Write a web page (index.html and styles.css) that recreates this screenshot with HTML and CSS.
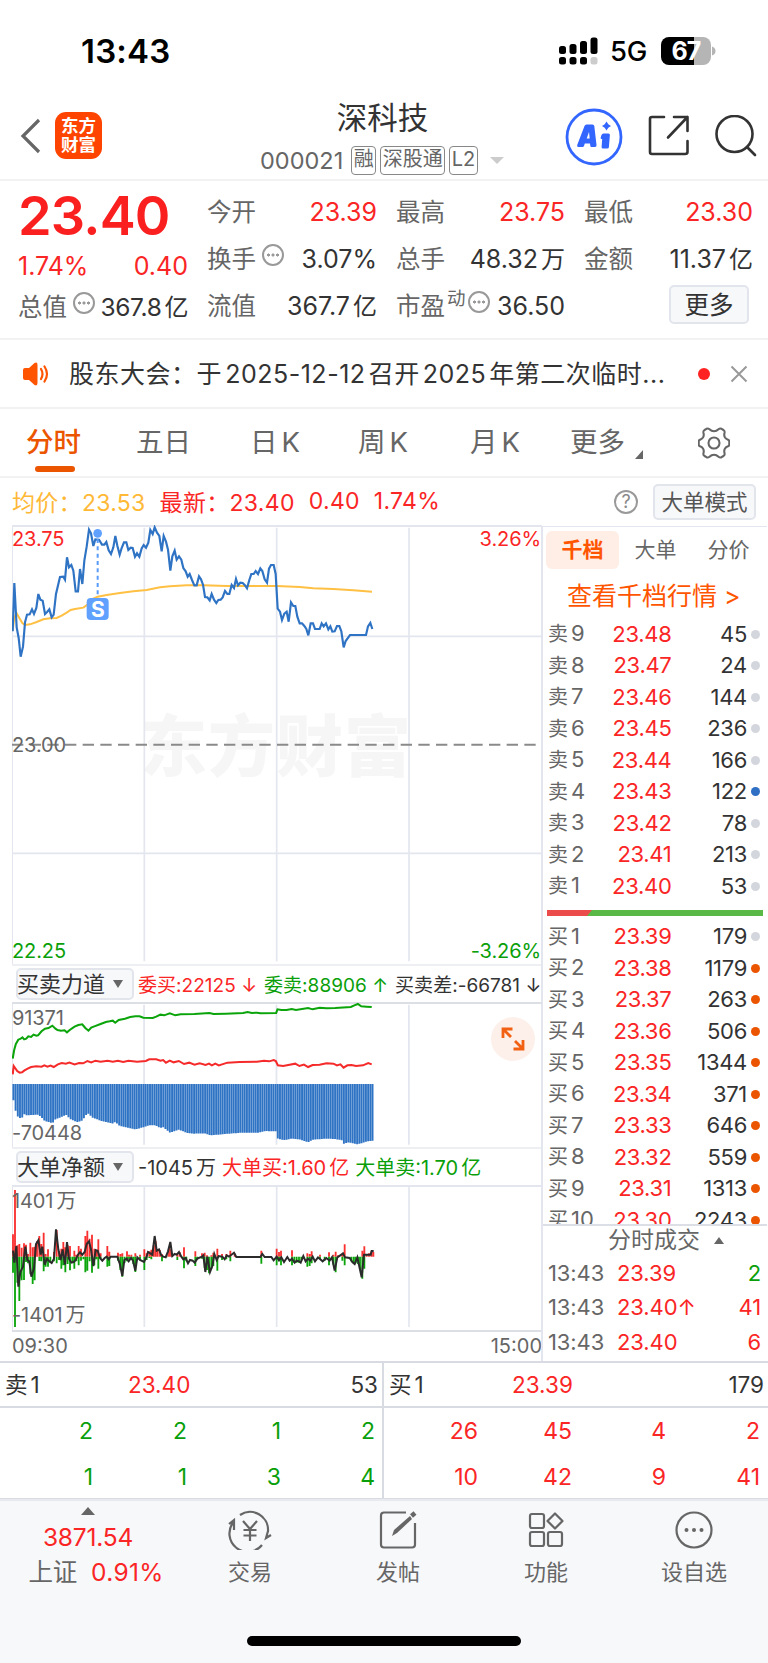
FILE: index.html
```html
<!DOCTYPE html>
<html lang="zh-CN">
<head>
    <meta charset="UTF-8">
    <meta name="viewport" content="width=device-width, initial-scale=1.0">
    <title>深科技 000021</title>
    <link rel="stylesheet" href="styles.css">
</head>
<body>
    <div class="status">
        <div class="time">13:43</div>
        <div class="status-right">
            <svg class="signal" width="39" height="28" viewBox="0 0 39 28">
                <rect x="0" y="9" width="7" height="8" rx="2.5"/><rect x="10.5" y="7" width="7" height="10" rx="2.5"/>
                <rect x="21" y="4" width="7" height="13" rx="2.5"/><rect x="31.5" y="0.5" width="7" height="16.5" rx="2.5"/>
                <rect x="0" y="20" width="7" height="7.5" rx="2.5"/><rect x="10.5" y="20" width="7" height="7.5" rx="2.5"/>
                <rect x="21" y="20" width="7" height="7.5" rx="2.5"/><rect x="31.5" y="20" width="7" height="7.5" rx="2.5" fill="#ccc"/>
            </svg>
            <span class="net">5G</span>
            <div class="battery">67</div>
            <svg width="4" height="10" viewBox="0 0 4 10"><path d="M0 0.5Q3.5 1.5 3.5 5T0 9.5Z" fill="#b5b5b5"/></svg>
        </div>
    </div>

    <div class="nav">
        <svg class="back" width="22" height="36" viewBox="0 0 22 36"><path d="M19 2L3 18L19 34" fill="none" stroke="#666" stroke-width="3.2"/></svg>
        <div class="logo">东方<br>财富</div>
        <div class="title">
            <h1>深科技</h1>
            <div class="code"><span>000021</span><b>融</b><b>深股通</b><b>L2</b><i class="drop"></i></div>
        </div>
        <div class="nav-icons">
            <svg width="58" height="58" viewBox="0 0 58 58">
                <circle cx="29" cy="29" r="27" fill="none" stroke="#3366ff" stroke-width="2.8"/>
                <path d="M21.5 16.5H27.5Q29 16.500 29.300 18L31.500 37Q31.700 39 30 39H26.500Q25.500 39 25.300 38L25 35.500H19.800L19 38Q18.700 39 17.500 39H13.500Q11.500 39 12.200 37L19.500 18Q20 16.500 21.500 16.500Z" fill="#3366ff"/>
                <path d="M24 24L24.700 30.500H21.700Z" fill="#fff"/>
                <path d="M38.500 25.500H43.500Q45 25.500 44.900 27L43.900 39Q43.800 40.500 42.300 40.500H38Q36.500 40.500 36.600 39L37.200 31H36.500Q35.500 31 35.700 29.500L36.500 27Q37 25.500 38.500 25.500Z" fill="#3366ff"/>
                <path d="M41.500 13.500L43.300 16.200L46 18L43.300 19.800L41.500 22.500L39.700 19.800L37 18L39.700 16.200Z" fill="#3366ff"/>
            </svg>
            <svg width="42" height="42" viewBox="0 0 42 42" fill="none" stroke="#333" stroke-width="2.600" stroke-linejoin="round" stroke-linecap="round">
                <path d="M16 2H4Q2 2 2 4V37Q2 39 4 39H37Q39.500 39 39.500 37V26M26 2H39.500V16M39.500 2L20 22.500"/>
            </svg>
            <svg width="44" height="42" viewBox="0 0 44 42" fill="none" stroke="#333" stroke-width="2.600" stroke-linecap="round">
                <circle cx="20.500" cy="19" r="18"/><path d="M33 32L41 40"/>
            </svg>
        </div>
    </div>

    <div class="quote">
        <div class="cell price">23.40</div>
        <div class="cell"><label>今开</label><span class="red">23.39</span></div>
        <div class="cell"><label>最高</label><span class="red">23.75</span></div>
        <div class="cell"><label>最低</label><span class="red">23.30</span></div>
        <div class="cell change"><span class="red">1.74%</span><span class="red">0.40</span></div>
        <div class="cell"><label>换手<i class="dots"></i></label><span>3.07%</span></div>
        <div class="cell"><label>总手</label><span>48.32<em>万</em></span></div>
        <div class="cell"><label>金额</label><span>11.37<em>亿</em></span></div>
        <div class="cell total"><label>总值<i class="dots"></i></label><span>367.8<em>亿</em></span></div>
        <div class="cell"><label>流值</label><span>367.7<em>亿</em></span></div>
        <div class="cell"><label>市盈<sup>动</sup><i class="dots"></i></label><span>36.50</span></div>
        <div class="cell more"><button>更多</button></div>
    </div>

    <div class="news">
        <svg width="28" height="24" viewBox="0 0 28 24">
            <path d="M1 8Q1 6 3 6H7L12.500 1Q15.500 -0.500 15.500 3V21Q15.500 24.500 12.500 23L7 18H3Q1 18 1 16Z" fill="#f50"/>
            <path d="M19 7Q22 12 19 17M22.500 4.500Q27.500 12 22.500 19.500" fill="none" stroke="#f50" stroke-width="2.200" stroke-linecap="round"/>
        </svg>
        <p>股东大会：于<s></s>2025-12-12<s></s>召开<s></s>2025<s></s>年第二次临时...</p>
        <i class="dot"></i>
        <svg width="18" height="18" viewBox="0 0 18 18"><path d="M1.500 1.500L16.500 16.500M16.500 1.500L1.500 16.500" stroke="#999" stroke-width="2"/></svg>
    </div>

    <div class="tabs">
        <span class="on">分时</span><span>五日</span><span>日<s></s>K</span><span>周<s></s>K</span><span>月<s></s>K</span>
        <span>更多<i class="corner"></i></span>
        <svg width="32" height="32" viewBox="0 0 32 32" fill="none" stroke="#666" stroke-width="2.100" stroke-linejoin="round">
            <path d="M8.500 1.800Q10 1 11.500 2.200Q13.500 4.300 16 4.300Q18.500 4.300 20.500 2.200Q22 1 23.500 1.800L25.500 3Q27 4 26.500 6Q25.800 8.500 27 10.500Q28 12 30 12.700Q31.300 13.300 31.300 14.500V17.500Q31.300 18.700 30 19.300Q28 20 27 21.500Q25.800 23.500 26.500 26Q27 28 25.500 29L23.500 30.200Q22 31 20.500 29.800Q18.500 27.700 16 27.700Q13.500 27.700 11.500 29.800Q10 31 8.500 30.200L6.500 29Q5 28 5.500 26Q6.200 23.500 5 21.500Q4 20 2 19.300Q0.700 18.700 0.700 17.500V14.500Q0.700 13.300 2 12.700Q4 12 5 10.500Q6.200 8.500 5.500 6Q5 4 6.500 3Z"/>
            <circle cx="16" cy="16" r="5.500"/>
        </svg>
    </div>

    <div class="legend">
        <span class="avg">均价：23.53</span>
        <span class="red">最新：23.40</span>
        <span class="red">0.40</span>
        <span class="red">1.74%</span>
        <i class="help">?</i>
        <button>大单模式</button>
    </div>

    <div class="main">
        <div class="charts">
            <div class="chart price-chart">
                <div class="watermark">东方财富</div>
                <svg width="530" height="439" viewBox="36 33 1590 1317" fill="none">
                    <path d="M36 367H1626M36 1018H1626M433 41V1342M830 41V1342M1227 41V1342" stroke="#e3e6ee" stroke-width="5"/>
                    <path d="M36 692H1626" stroke="#8a8a8a" stroke-width="6" stroke-dasharray="34 19"/>
                    <polyline stroke="#ffc043" stroke-width="6" points="38,350 43,310 50,298 58,312 67,327 75,333 90,331 110,324 130,316 150,313 170,312 185,305 200,296 212,288 225,285 250,281 260,274 275,256 293,248 320,243 360,237 400,232 440,228 480,220 510,217 560,214 610,214 680,216 830,216 900,219 940,223 1000,225 1060,229 1116,233"/>
                    <polyline stroke="#2f73c4" stroke-width="6.500" points="38,352 43,207 50,340 56,372 62,428 69,398 75,325 81,302 89,301 96,286 102,300 109,282 115,240 121,257 128,260 135,300 142,293 148,286 155,310 161,302 168,240 180,189 190,188 195,197 201,130 207,160 214,153 220,170 227,232 234,232 240,165 247,210 253,140 260,98 267,47 273,58 280,96 286,76 297,77 306,92 313,92 319,84 326,109 333,120 340,100 346,66 352,95 359,122 365,102 372,85 379,85 385,108 392,101 398,102 405,128 411,118 418,128 425,103 431,93 438,101 445,86 451,48 458,60 464,40 471,56 478,66 485,112 491,66 498,83 504,107 511,170 517,127 524,110 530,137 537,127 544,137 550,162 557,172 563,188 569,180 576,198 583,214 590,214 597,187 603,196 609,212 615,249 622,250 629,259 635,240 642,257 649,267 655,258 662,257 668,250 675,231 682,240 688,240 695,213 702,222 708,195 714,214 721,206 728,207 734,213 741,223 748,198 754,180 761,180 767,171 774,180 781,163 787,171 794,196 801,206 807,164 813,153 821,153 827,180 833,284 840,293 846,318 853,299 860,293 866,323 873,265 880,276 886,276 892,308 899,328 906,328 913,336 919,345 925,364 932,328 939,328 945,345 959,345 965,328 971,337 978,328 985,346 991,337 997,353 1004,352 1011,336 1018,336 1024,352 1031,400 1037,381 1050,363 1098,363 1104,337 1111,327 1117,345"/>
                    <path d="M293 75V250" stroke="#5a9bfa" stroke-width="6" stroke-dasharray="12 10"/>
                    <circle cx="293" cy="58" r="13" fill="#60a0ff"/>
                    <rect x="260" y="252" width="66" height="66" rx="12" fill="#60a0ff"/>
                </svg>
                <b class="mark">S</b>
                <span class="tl red">23.75</span><span class="tr red">3.26%</span>
                <span class="ml">23.00</span>
                <span class="bl green">22.25</span><span class="br green">-3.26%</span>
            </div>

            <div class="bar">
                <button>买卖力道<i></i></button>
                <p class="force"><span class="red">委买:22125 <u>↓</u></span><span class="green">委卖:88906 <u>↑</u></span><span>买卖差:-66781 <u>↓</u></span></p>
            </div>
            <div class="chart force-chart">
                <svg width="530" height="144" viewBox="35 130 1525 432" preserveAspectRatio="none" fill="none">
                    <path d="M415 138V558M796 138V558M1177 138V558" stroke="#e3e6ee" stroke-width="5"/>
                    <path id="diffBars" stroke="#2f73c4" stroke-width="5.500"/>
                    <polyline stroke="#0ba50b" stroke-width="6" points="37,300 41,275 46,256 53,243 60,240 65,236 70,242 76,240 82,233 90,235 97,228 105,231 110,230 120,218 130,210 140,208 151,201 160,210 166,214 176,216 186,215 193,221 202,213 215,204 226,199 237,197 246,208 255,216 263,207 272,203 290,196 305,190 316,188 325,186 332,192 342,184 360,180 375,175 390,173 402,173 413,177 440,178 450,174 462,168 473,170 489,164 505,170 520,167 560,166 603,163 615,166 650,165 700,163 713,160 725,163 740,162 750,164 795,163 799,152 810,154 825,154 840,151 852,154 887,148 900,152 920,147 940,149 965,148 1010,145 1020,140 1030,136 1040,143 1055,144 1070,145"/>
                    <polyline stroke="#f52a2a" stroke-width="6" points="37,347 40,322 44,328 50,337 57,342 64,341 70,336 80,330 90,325 105,323 120,324 128,320 137,324 146,321 155,325 167,317 178,313 190,315 200,312 215,317 228,313 240,314 252,307 263,311 275,306 290,309 310,306 325,309 340,306 355,310 370,306 395,309 420,307 430,302 450,302 462,306 470,304 478,312 489,306 500,311 515,307 530,316 545,312 560,318 575,314 592,319 602,315 610,320 620,315 630,320 655,312 690,310 740,309 760,306 775,308 788,304 794,307 800,320 815,322 830,319 850,315 862,322 875,318 887,325 900,319 920,318 940,314 960,315 970,320 980,317 989,327 1000,320 1012,319 1025,322 1045,320 1060,313 1070,317"/>
                </svg>
                <span class="tl">91371</span><span class="bl">-70448</span>
                <div class="expand">
                    <svg width="24" height="24" viewBox="0 0 24 24" fill="none" stroke="#f26013" stroke-width="2.800"><path d="M2 11V2H11.500M2.500 2.500L10 10M22 13V22H12.500M21.500 21.500L14 14"/></svg>
                </div>
            </div>

            <div class="bar">
                <button>大单净额<i></i></button>
                <p class="net-amount"><span>-1045<s></s>万</span><span class="red">大单买:1.60<s></s>亿</span><span class="green">大单卖:1.70<s></s>亿</span></p>
            </div>
            <div class="chart net-chart">
                <svg width="530" height="144" viewBox="12 7 1590 432" fill="none">
                    <path d="M409 13V433M806 13V433M1203 13V433" stroke="#e3e6ee" stroke-width="5"/>
                    <path id="buyBars" stroke="#fa2f2f" stroke-width="5.500"/>
                    <path id="sellBars" stroke="#0ba50b" stroke-width="5.500"/>
                    <polyline stroke="#2b2b2b" stroke-width="6" points="15,204 19,240 25,190 31,312 37,268 45,252 52,192 58,232 64,236 70,282 78,258 84,184 91,173 98,216 103,192 110,246 117,228 124,236 131,241 138,228 144,140 151,200 158,232 164,200 171,246 177,178 183,228 190,240 197,238 203,232 210,216 216,209 223,216 230,208 236,184 243,176 249,200 256,250 263,202 269,204 276,226 283,234 290,226 296,222 302,230 308,222 328,222 335,242 343,280 349,232 356,228 362,236 369,226 375,234 382,264 388,224 396,232 408,238 416,222 420,208 427,212 433,216 440,160 446,204 453,200 460,218 466,222 473,224 480,206 487,178 493,220 500,214 506,216 513,208 520,222 526,230 533,226 540,242 546,232 554,234 560,240 568,228 582,222 586,218 592,268 598,222 606,268 613,250 619,214 626,232 632,220 643,222 650,230 656,218 663,222 678,210 685,223 757,223 763,214 770,223 790,223 797,233 806,222 813,233 820,224 828,238 838,223 845,234 852,228 860,240 866,234 873,236 878,240 886,220 893,236 900,228 907,234 914,222 921,236 930,224 944,236 955,226 965,234 972,224 980,264 988,224 1000,216 1005,212 1011,224 1025,226 1033,238 1040,244 1048,224 1061,284 1068,216 1088,216 1091,205 1097,205"/>
                </svg>
                <span class="tl">1401<s></s>万</span><span class="bl">-1401<s></s>万</span>
            </div>
            <div class="hours"><span>09:30</span><span>15:00</span></div>
        </div>

        <div class="side">
            <div class="side-tabs"><span class="on">千档</span><span>大单</span><span>分价</span></div>
            <a class="depth-link">查看千档行情 &gt;</a>
            <div id="asks"></div>
            <svg class="ratio" width="216" height="6" viewBox="0 0 216 6"><path d="M0 0H216V6H0Z" fill="#5ab946"/><path d="M0 0H45L40 6H0Z" fill="#eb4b4b"/></svg>
            <div class="bids" id="bids"></div>
            <div class="deals-head">分时成交<i></i></div>
            <div class="deal"><span>13:43</span><span class="red">23.39</span><b class="green">2</b></div>
            <div class="deal"><span>13:43</span><span class="red">23.40↑</span><b class="red">41</b></div>
            <div class="deal"><span>13:43</span><span class="red">23.40</span><b class="red">6</b></div>
        </div>
    </div>

    <div class="queue">
        <div class="half">
            <div class="best"><span>卖<s></s>1</span><span class="red">23.40</span><span>53</span></div>
            <div class="orders green"><span>2</span><span>2</span><span>1</span><span>2</span><span>1</span><span>1</span><span>3</span><span>4</span></div>
        </div>
        <div class="half">
            <div class="best"><span>买<s></s>1</span><span class="red">23.39</span><span>179</span></div>
            <div class="orders red"><span>26</span><span>45</span><span>4</span><span>2</span><span>10</span><span>42</span><span>9</span><span>41</span></div>
        </div>
    </div>

    <div class="footer">
        <div class="index">
            <i></i>
            <div class="red">3871.54</div>
            <div class="name">上证<span class="red">0.91%</span></div>
        </div>
        <div class="item">
            <svg width="44" height="40" viewBox="0 0 44 40" fill="none" stroke="#666" stroke-width="2.200">
                <path d="M12 5A18 18 0 0 1 40 21L38 28L43 25M34 35A18 18 0 0 1 5.500 12M1 14L6 10V20"/>
                <path d="M15 11L22 19L29 11M22 19V31M15.500 20H28.500M15.500 25.500H28.500"/>
            </svg>
            交易
        </div>
        <div class="item">
            <svg width="40" height="40" viewBox="0 0 40 40" fill="none" stroke="#666" stroke-width="2.200">
                <path d="M28 2.500H6Q3 2.500 3 5.500V34.500Q3 37.500 6 37.500H34Q37 37.500 37 34.500V13"/>
                <path d="M14 26L16 20L32 6L34 9L19 23Z" fill="#666" stroke="none"/><path d="M33.500 6L37 3" stroke-width="4.500"/>
            </svg>
            发帖
        </div>
        <div class="item">
            <svg width="38" height="40" viewBox="0 0 38 40" fill="none" stroke="#666" stroke-width="2.200" stroke-linejoin="round">
                <rect x="3" y="4" width="14" height="14" rx="2"/><rect x="3" y="22" width="14" height="14" rx="2"/><rect x="21" y="22" width="14" height="14" rx="2"/><path d="M28 3.500L35.500 11L28 18.500L20.500 11Z"/>
            </svg>
            功能
        </div>
        <div class="item">
            <svg width="40" height="40" viewBox="0 0 40 40"><circle cx="20" cy="20" r="17.500" fill="none" stroke="#666" stroke-width="2.200"/><g fill="#666"><circle cx="12.500" cy="20" r="2"/><circle cx="20" cy="20" r="2"/><circle cx="27.500" cy="20" r="2"/></g></svg>
            设自选
        </div>
    </div>
    <div class="home"></div>

    <script>
        // [档位, 价格, 手数, 圆点颜色]
        const asks = [
            ['9', '23.48', 45], ['8', '23.47', 24], ['7', '23.46', 144],
            ['6', '23.45', 236], ['5', '23.44', 166], ['4', '23.43', 122, 'blue'],
            ['3', '23.42', 78], ['2', '23.41', 213], ['1', '23.40', 53]
        ];
        const bids = [
            ['1', '23.39', 179], ['2', '23.38', 1179, 'orange'], ['3', '23.37', 263, 'orange'],
            ['4', '23.36', 506, 'orange'], ['5', '23.35', 1344, 'orange'], ['6', '23.34', 371, 'orange'],
            ['7', '23.33', 646, 'orange'], ['8', '23.32', 559, 'orange'], ['9', '23.31', 1313, 'orange'],
            ['10', '23.30', 2243, 'orange']
        ];

        function renderLevels(id, side, rows) {
            document.getElementById(id).innerHTML = rows.map(([n, price, vol, dot]) => `
                <div class="level"><span><em>${side}</em>${n}</span><span class="red">${price}</span><b>${vol}</b><i class="${dot || ''}"></i></div>
            `).join('');
        }
        renderLevels('asks', '卖', asks);
        renderLevels('bids', '买', bids);

        // 买卖差柱: 轮廓点之间线性插值
        const outline = [[37,425],[41,425],[45,455],[50,472],[58,478],[65,476],[70,466],[78,470],[108,468],[118,474],[130,488],[142,490],[151,494],[160,482],[175,476],[193,468],[200,480],[222,490],[238,486],[247,470],[255,465],[265,476],[290,486],[325,495],[332,490],[345,502],[390,512],[405,508],[430,500],[447,500],[462,508],[470,506],[490,522],[515,513],[540,523],[560,525],[590,524],[605,530],[660,525],[700,522],[745,522],[765,517],[790,518],[796,517],[800,541],[820,544],[840,540],[865,543],[887,551],[900,543],[940,540],[965,541],[985,545],[990,555],[1005,551],[1030,557],[1055,549],[1070,546],[1080,546]];
        let d = '', k = 0;
        for (let x = 39; x < 1075; x += 6.34) {
            while (outline[k + 1][0] < x) k++;
            const [x0, y0] = outline[k], [x1, y1] = outline[k + 1];
            d += `M${x.toFixed(1)} 376V${(y0 + (y1 - y0) * (x - x0) / (x1 - x0)).toFixed(1)}`;
        }
        document.getElementById('diffBars').setAttribute('d', d);

        // 大单净额: [x, 买入顶部, 卖出底部], 零轴在 222
        const flows = [[15,155,270],[21,22,433],[28,188,300],[34,184,355],[41,195,293],[48,182,292],[54,186,238],[60,214,242],[67,180,275],[74,194,304],[80,192,293],[87,176,222],[94,160,235],[100,184,236],[107,150,266],[113,214,252],[120,200,252],[127,222,240],[138,208,236],[146,142,242],[153,206,232],[160,198,258],[166,178,248],[172,194,269],[179,188,244],[186,190,263],[193,222,240],[199,204,258],[205,216,236],[212,190,248],[219,198,234],[226,222,230],[232,160,269],[238,144,264],[245,168,236],[252,156,270],[259,198,248],[265,202,230],[271,170,258],[278,212,226],[298,190,252],[304,207,250],[330,210,234],[337,214,262],[343,212,282],[350,222,240],[357,206,236],[363,216,230],[370,216,232],[376,222,244],[382,212,268],[396,216,232],[409,200,262],[416,212,232],[424,206,226],[430,201,230],[437,188,222],[443,176,222],[449,200,222],[456,203,222],[462,214,236],[476,216,224],[483,196,222],[489,200,222],[508,212,232],[515,208,222],[528,194,257],[535,222,236],[562,206,250],[568,222,230],[582,212,228],[590,210,256],[597,218,262],[603,222,272],[610,218,258],[616,210,250],[628,198,264],[642,214,232],[655,214,230],[667,204,236],[680,212,222],[760,204,243],[806,198,248],[813,208,236],[819,204,248],[852,203,248],[859,222,240],[866,222,240],[873,222,240],[880,222,234],[898,212,252],[905,214,250],[911,206,242],[936,216,230],[950,222,234],[963,209,248],[976,216,246],[983,207,269],[990,218,224],[1003,212,234],[1010,185,248],[1030,222,236],[1037,222,242],[1043,222,242],[1050,222,244],[1056,222,262],[1063,204,288],[1069,191,258],[1076,216,222],[1083,212,222],[1090,206,222],[1096,208,222]];
        document.getElementById('buyBars').setAttribute('d', flows.map(f => `M${f[0]} 222V${f[1]}`).join(''));
        document.getElementById('sellBars').setAttribute('d', flows.map(f => `M${f[0]} 222V${f[2]}`).join(''));
    </script>
</body>
</html>
```
FILE: styles.css
```css
* { box-sizing: border-box; }
body { margin: 0; width: 768px; height: 1663px; background: #fff; color: #333; font-family: Inter, "Noto Sans CJK SC", sans-serif; display: flex; flex-direction: column; overflow: hidden; }
p, h1 { margin: 0; font-weight: normal; }
i, em { font-style: normal; }
u { text-decoration: none; }
s { display: inline-block; width: 3px; }
button { font-family: inherit; color: #333; background: #f7f8fa; border: 2px solid #e2e5ec; border-radius: 5px; padding: 0; }
svg { display: block; flex: none; }
.red { color: #fa2525; }
.green { color: #0a9f0a; }

.status { height: 100px; display: flex; justify-content: space-between; padding: 2px 52px 0 81px; align-items: center; color: #000; flex: none; }
.time { font-size: 33px; font-weight: 600; letter-spacing: 0.2px; }
.status-right { display: flex; align-items: center; }
.net { font-size: 27.500px; font-weight: 500; margin: 0 14px 0 12px; letter-spacing: -0.3px; }
.battery { width: 50px; height: 28px; border-radius: 8px; background: linear-gradient(to right, #000 66%, #b5b5b5 66%); color: #fff; font-size: 25px; line-height: 28px; font-weight: 700; text-align: center; margin-right: 1px; letter-spacing: -1px; }

.nav { height: 81px; display: flex; align-items: center; border-bottom: 2px solid #f2f2f2; padding: 0 10px 0 20px; flex: none; }
.back { margin-top: -7px; }
.logo { width: 47px; height: 47px; margin: -9px 0 0 13px; border-radius: 11px; background: #ff4400; color: #fff; font-size: 17.5px; line-height: 19.5px; font-weight: 700; text-align: center; padding-top: 4px; }
.title { width: 250px; margin-left: 158px; text-align: center; }
.title h1 { font-size: 30.500px; line-height: 38px; margin-top: -5px; padding-right: 5px; }
.code { display: flex; align-items: center; height: 30px; margin-top: 8px; font-size: 23.500px; color: #666; white-space: nowrap; }
.code span { margin-right: 8px; }
.code b { font-weight: normal; font-size: 20px; line-height: 25px; height: 29px; padding: 0 1.500px; border: 1.5px solid #888; border-radius: 4px; margin-right: 4px; }
.drop { border: 7px solid transparent; border-top-color: #ccc; border-bottom: 0; margin-left: 8px; }
.nav-icons { display: flex; align-items: center; gap: 24px; margin: -8px 0 0 auto; }
.nav-icons svg:first-child { margin: 2px 1px 0 0; }

.quote { height: 159px; padding: 8px 14px 0 18px; display: grid; grid-template-columns: 170px 170px 169px 169px; grid-template-rows: repeat(3, 47px); column-gap: 19px; border-bottom: 2px solid #f2f2f2; font-size: 25px; flex: none; }
.cell { display: flex; justify-content: space-between; align-items: center; white-space: nowrap; line-height: 47px; }
.cell label { color: #666; display: flex; font-size: 24.500px; }
.cell em { margin-left: 3px; font-size: 24px; }
.cell.price { font-size: 54px; font-weight: 600; color: #fa2020; padding-top: 6px; letter-spacing: -0.8px; }
.cell.change { padding-top: 14px; }
.cell sup { font-size: 18.500px; line-height: 30px; margin-left: 2px; }
.dots { width: 22px; height: 22px; border: 2px solid #999; border-radius: 50%; margin: 8px 0 0 6px; background: radial-gradient(circle at 4.500px 9px, #999 1.300px, transparent 1.800px), radial-gradient(circle at 9px 9px, #999 1.300px, transparent 1.800px), radial-gradient(circle at 13.500px 9px, #999 1.300px, transparent 1.800px); }
.cell sup + .dots { margin-left: 2px; }
.total { padding-top: 2px; }
.total > span { font-size: 24.500px; letter-spacing: -0.4px; }
.more { justify-content: flex-end; padding-right: 4px; }
.more button { width: 80px; height: 39px; margin-top: -4px; font-size: 24.500px; line-height: 34px; }

.news { height: 69px; display: flex; align-items: center; padding: 0 20px 0 22px; border-bottom: 2px solid #f2f2f2; flex: none; }
.news p { margin: -4px 0 0 19px; width: 630px; font-size: 25px; letter-spacing: 0.52px; white-space: nowrap; }
.news s { width: 3px; }
.news .dot { width: 12px; height: 12px; border-radius: 50%; background: #f22; margin: 0 20px 0 -1px; }

.tabs { height: 69px; display: grid; grid-template-columns: 110px 114px 108px 112px 100px 128px 32px; align-items: center; padding-left: 26px; border-bottom: 2px solid #f2f2f2; font-size: 27.500px; color: #666; flex: none; }
.tabs span { line-height: 67px; display: flex; position: relative; }
.tabs s { width: 4px; }
.tabs .on { color: #eb5500; font-weight: 500; }
.tabs .on::after { content: ""; position: absolute; left: 9px; bottom: 4px; width: 40px; height: 6px; border-radius: 3px; background: #eb5500; }
.corner { border-left: 8px solid transparent; border-bottom: 9px solid #666; height: 0; margin: 41px 0 0 10px; }

.legend { height: 48px; display: flex; align-items: center; padding: 0 12px 0 12px; font-size: 23px; flex: none; }
.legend .avg { color: #ffb937; }
.legend span { margin: -2px 14px 0 0; white-space: nowrap; letter-spacing: 0.3px; }
.help { width: 24px; height: 24px; border: 2px solid #999; border-radius: 50%; color: #888; font-size: 18px; line-height: 20px; text-align: center; margin-left: auto; }
.legend button { width: 103px; height: 36px; margin-left: 15px; font-size: 21.500px; line-height: 30px; color: #555; }

.main { display: flex; height: 835px; flex: none; }
.charts { width: 530px; margin-left: 12px; }
.chart { position: relative; font-size: 20px; line-height: 24px; color: #666; border-top: 2px solid #e3e6ee; }
.chart svg { margin-top: -2px; }
.chart > span { position: absolute; letter-spacing: -0.1px; }
.price-chart, .force-chart, .net-chart { box-shadow: inset 1px 0 #e3e6ee; }
.tl { left: 0; top: 0; }
.tr { right: 1px; top: 0; }
.ml { left: 0; top: 206px; }
.bl { left: 0; bottom: 1px; }
.br { right: 1px; bottom: 1px; }
.price-chart { height: 439px; margin-top: -1px; }
.price-chart .bl, .price-chart .br { bottom: 1px; }
.watermark { position: absolute; left: 128px; top: 172px; font-size: 67px; line-height: 96px; font-weight: 900; letter-spacing: 1px; color: #f6f6f6; }
.price-chart svg { position: relative; }
.mark { position: absolute; left: 75px; top: 71px; width: 22px; text-align: center; color: #fff; font-size: 21px; }
.bar { height: 38px; display: flex; align-items: center; border-top: 2px solid #edeff3; }
.bar button { width: 118px; height: 32px; margin-left: 4px; font-size: 22px; line-height: 26px; display: flex; align-items: center; flex: none; text-indent: -1px; }
.bar button i { border: 5px solid transparent; border-top: 8px solid #666; border-bottom: 0; margin-left: 8px; }
.bar p { display: flex; margin: -1px 0 0 4px; white-space: nowrap; }
.force { gap: 7px; font-size: 19px; letter-spacing: 0.03px; }
.net-amount { gap: 6px; font-size: 20px; }
.force-chart { height: 145px; border-top-color: #dcdfe6; }
.force-chart .tl { top: 2px; }
.force-chart .bl { bottom: 2px; }
.expand { position: absolute; right: 7px; top: 13px; width: 44px; height: 44px; border-radius: 50%; background: #fdf0ea; display: flex; align-items: center; justify-content: center; }
.expand svg { margin: 0; }
.net-chart { height: 145px; }
.net-chart .tl { top: 2px; }
.net-chart .bl { bottom: 3px; }
.hours { height: 30px; border-top: 2px solid #dcdfe6; display: flex; justify-content: space-between; font-size: 20px; line-height: 29px; color: #666; }

.side { width: 226px; margin-left: -1px; border: solid #e3e6ee; border-width: 1px 0 0 2px; font-size: 22px; line-height: 31.500px; }
.side-tabs { display: flex; margin: 4px 0 0 3px; font-size: 21px; line-height: 38px; color: #666; }
.side-tabs span { width: 73px; text-align: center; }
.side-tabs .on { background: #ffeee6; border-radius: 6px; color: #ff5500; font-weight: 700; }
.depth-link { display: block; height: 49px; line-height: 55px; padding-left: 24px; font-size: 25px; color: #ff5500; white-space: nowrap; }
.level { display: grid; grid-template-columns: 54px 69.500px 75.500px 13px; align-items: center; height: 31.500px; padding-left: 5px; white-space: nowrap; letter-spacing: -0.3px; }
.level span:first-child { color: #666; letter-spacing: 0; }
.level em { font-size: 20px; margin-right: 3px; }
.level span:nth-child(2), .level b { text-align: right; }
.level b, .deal b { font-weight: normal; }
.level i { width: 9px; height: 9px; border-radius: 50%; background: #d3d6dd; margin-left: 4px; }
.level i.blue { background: #2f6fc4; }
.level i.orange { background: #eb5500; }
.ratio { margin: 8px 0 5px 4px; }
.bids { height: 303px; overflow: hidden; }
.deals-head { height: 32px; border-top: 2px solid #dcdfe6; color: #666; font-size: 23px; line-height: 31px; padding-left: 65px; display: flex; align-items: center; }
.deals-head i { border: 5px solid transparent; border-bottom: 7px solid #666; border-top: 0; margin-left: 14px; }
.deal { display: grid; grid-template-columns: 69px 1fr auto; padding: 0 6px 0 5px; height: 34.700px; line-height: 34.700px; letter-spacing: -0.1px; }
.deal span:first-child { color: #666; }

.queue { height: 138px; display: grid; grid-template-columns: 382px 386px; border: solid #d9dbe3; border-width: 2px 0 1px; font-size: 23px; flex: none; }
.half + .half { border-left: 2px solid #d9dbe3; }
.best { height: 45px; display: grid; grid-template-columns: 123px 63px 1fr; align-items: center; padding: 0 4px 0 5px; border-bottom: 2px solid #d9dbe3; line-height: 44px; font-size: 22.500px; }
.best span:last-child { text-align: right; }
.orders { display: grid; grid-template-columns: repeat(4, 94px); line-height: 46px; text-align: right; }
.orders.green { margin-left: -1px; }

.footer { display: flex; flex: 1; background: #f7f8fa; border-top: 2px solid #e8eaef; color: #666; font-size: 22px; padding-top: 8px; }
.index { width: 176px; text-align: center; font-size: 24.500px; }
.index i { display: block; width: 14px; margin: -2px auto 0; border: 7px solid transparent; border-top: 0; border-bottom: 8px solid #666; }
.index div { line-height: 35px; margin-top: 5px; white-space: nowrap; letter-spacing: -0.2px; }
.index .name { margin-top: 0; padding-left: 16px; }
.name span { margin-left: 14px; letter-spacing: 0.3px; }
.item { width: 148px; display: flex; flex-direction: column; align-items: center; line-height: 32px; gap: 6px; }
.item svg { margin-top: 1px; }
.home { position: absolute; left: 247px; top: 1636px; width: 274px; height: 10px; border-radius: 5px; background: #000; }
```
